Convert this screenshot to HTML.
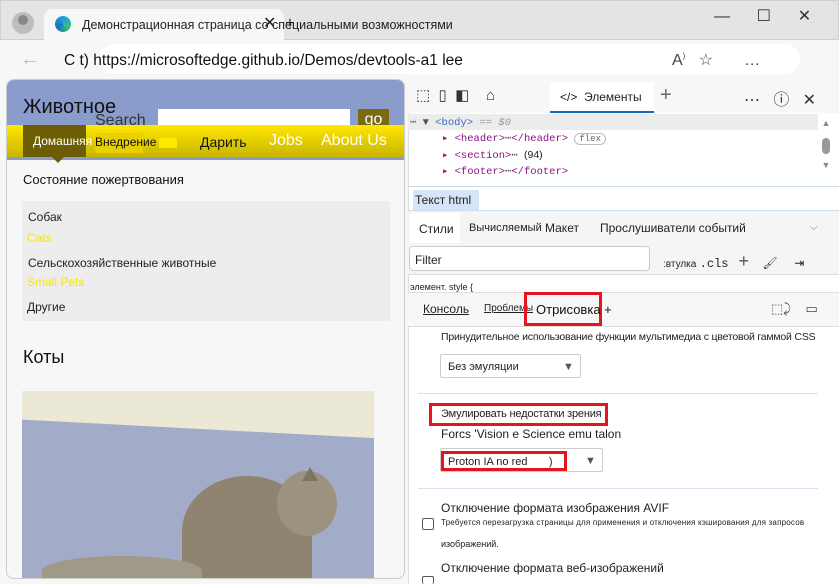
<!DOCTYPE html>
<html><head><meta charset="utf-8"><style>
*{box-sizing:border-box;margin:0;padding:0}
body{width:839px;height:584px;overflow:hidden;background:#f7f7f7;font-family:"Liberation Sans",sans-serif;position:relative;font-size:12px;color:#222}
.a{position:absolute}
.t{white-space:nowrap}
</style></head><body>
<div class="a" style="left:0;top:0;width:839px;height:40px;background:#e4e4e4;border:1px solid #cfcfcf"></div>
<div class="a" style="left:12px;top:12px;width:22px;height:22px;border-radius:50%;background:#bdbdbd"></div>
<div class="a" style="left:18px;top:15px;width:10px;height:10px;border-radius:50%;background:#888"></div>
<div class="a" style="left:44px;top:9px;width:240px;height:31px;background:#f7f7f7;border-radius:8px 8px 0 0"></div>
<div class="a" style="left:55px;top:16px;width:16px;height:16px;border-radius:50%;background:conic-gradient(#1fa0e0,#35c07a,#1a6fc0,#1fa0e0)"></div>
<div class="a t" style="left:82px;top:18px;font-size:12.5px">Демонстрационная страница со специальными возможностями</div>
<div class="a t" style="left:263px;top:13px;font-size:16px;color:#222">✕&nbsp;&nbsp;+</div>
<div class="a t" style="left:714px;top:6px;font-size:16px;color:#333">—&nbsp;&nbsp;&nbsp;&nbsp;&nbsp;&nbsp;☐&nbsp;&nbsp;&nbsp;&nbsp;&nbsp;&nbsp;✕</div>
<div class="a t" style="left:20px;top:48px;font-size:20px;color:#bbb">←</div>
<div class="a" style="left:100px;top:44px;width:700px;height:30px;background:#fff;border-radius:15px"></div>
<div class="a t" style="left:64px;top:52px;font-size:15.5px;color:#111">C t) https://microsoftedge.github.io/Demos/devtools-a1 lee</div>
<div class="a t" style="left:672px;top:50px;font-size:16px;color:#444">A<sup style="font-size:8px">)</sup>&nbsp;&nbsp;&nbsp;☆&nbsp;&nbsp;&nbsp;&nbsp;&nbsp;&nbsp;&nbsp;…</div>
<div class="a" style="left:6px;top:79px;width:399px;height:500px;background:#f7f7f7;border:1px solid #ccc;border-radius:8px;overflow:hidden">
 <div class="a" style="left:0;top:0;width:399px;height:80px;background:#8a9ccc"></div>
 <div class="a t" style="left:16px;top:16px;font-size:20px;color:#111">Животное</div>
 <div class="a t" style="left:88px;top:32px;font-size:16px;color:#333">Search</div>
 <div class="a" style="left:151px;top:29px;width:192px;height:20px;background:#fff"></div>
 <div class="a" style="left:351px;top:29px;width:31px;height:24px;background:#7a6a10;color:#fff;font-size:16px;text-align:center;padding-top:2px">go</div>
 <div class="a" style="left:0;top:45px;width:399px;height:32px;background:linear-gradient(#ffe800,#c9b400)"></div>
 <div class="a" style="left:16px;top:45px;width:63px;height:32px;background:#6d5e06"></div>
 <div class="a" style="left:45px;top:77px;border:6px solid transparent;border-top-color:#6d5e06"></div>
 <div class="a t" style="left:26px;top:54px;font-size:12px;color:#fff">Домашняя</div>
 <div class="a" style="left:88px;top:53px;width:48px;height:20px;background:#e8d000"></div>
 <div class="a t" style="left:88px;top:55px;font-size:12px;color:#111">Внедрение</div>
 <div class="a" style="left:152px;top:58px;width:18px;height:10px;background:#ffe800"></div>
 <div class="a t" style="left:193px;top:54px;font-size:14px;color:#111">Дарить</div>
 <div class="a t" style="left:262px;top:52px;font-size:16px;color:#fff">Jobs</div>
 <div class="a t" style="left:314px;top:52px;font-size:16px;color:#fff">About Us</div>
 <div class="a t" style="left:16px;top:92px;font-size:13px;color:#111">Состояние пожертвования</div>
 <div class="a" style="left:15px;top:121px;width:368px;height:120px;background:#ededed"></div>
 <div class="a t" style="left:21px;top:130px;font-size:12px">Собак</div>
 <div class="a t" style="left:20px;top:151px;font-size:12px;color:#f5e800">Cats</div>
 <div class="a t" style="left:21px;top:176px;font-size:12px">Сельскохозяйственные животные</div>
 <div class="a t" style="left:20px;top:195px;font-size:12px;color:#f5e800">Small Pets</div>
 <div class="a t" style="left:20px;top:220px;font-size:12px">Другие</div>
 <div class="a t" style="left:16px;top:267px;font-size:18px;color:#111">Коты</div>
 <div class="a" style="left:15px;top:311px;width:352px;height:190px;background:#a2abc8;overflow:hidden">
  <div class="a" style="left:-20px;top:-40px;width:400px;height:78px;background:#ece8d6;transform:rotate(3deg)"></div>
  <div class="a" style="left:160px;top:85px;width:130px;height:110px;background:#8f8470;border-radius:50% 50% 0 0"></div>
  <div class="a" style="left:255px;top:80px;width:60px;height:65px;background:#9c9280;border-radius:50%"></div>
  <div class="a" style="left:280px;top:68px;border:8px solid transparent;border-bottom:14px solid #7e7462"></div>
  <div class="a" style="left:20px;top:165px;width:160px;height:30px;background:#a09888;border-radius:50% 50% 0 0"></div>
 </div>
</div>
<div class="a" style="left:408px;top:79px;width:431px;height:505px;background:#fff;border-left:1px solid #ddd"></div>
<div class="a" style="left:408px;top:79px;width:431px;height:34px;background:#f7f7f7"></div>
<div class="a t" style="left:416px;top:86px;font-size:15px;color:#333">⬚&nbsp;&nbsp;▯&nbsp;&nbsp;◧&nbsp;&nbsp;&nbsp;&nbsp;⌂</div>
<div class="a" style="left:550px;top:82px;width:104px;height:31px;background:#fff;border-bottom:2px solid #0f6cbd"></div>
<div class="a t" style="left:560px;top:90px;font-size:12px;color:#222">&lt;/&gt;&nbsp;&nbsp;Элементы</div>
<div class="a t" style="left:660px;top:84px;font-size:20px;color:#666">+</div>
<div class="a t" style="left:744px;top:86px;font-size:16px;color:#333">⋯&nbsp;&nbsp;&nbsp;ⓘ&nbsp;&nbsp;&nbsp;✕</div>
<div class="a" style="left:408px;top:114px;width:410px;height:16px;background:#ececec"></div>
<div class="a t" style="left:410px;top:116px;font-family:'Liberation Mono',monospace;font-size:10.5px;color:#555">⋯ ▼ <span style="color:#3a6cbf">&lt;body&gt;</span> <i style="color:#999">== $0</i></div>
<div class="a t" style="left:442px;top:131px;font-family:'Liberation Mono',monospace;font-size:10.5px;color:#881280;line-height:16px">▸ &lt;header&gt;<span style="color:#555">⋯</span>&lt;/header&gt; <span style="color:#666;border:1px solid #bbb;border-radius:8px;font-size:9px;padding:0 4px">flex</span><br>▸ &lt;section&gt;<span style="color:#555">⋯</span> <span style="color:#222;font-family:'Liberation Sans'">(94)</span><br>▸ &lt;footer&gt;<span style="color:#555">⋯</span>&lt;/footer&gt;</div>
<div class="a" style="left:820px;top:118px;width:12px;height:60px;color:#888;font-size:9px;text-align:center">▲<div style="width:8px;height:16px;background:#999;border-radius:4px;margin:10px auto 6px"></div>▼</div>
<div class="a" style="left:408px;top:186px;width:431px;height:1px;background:#cde"></div>
<div class="a" style="left:413px;top:190px;width:66px;height:20px;background:#d6e4f7"></div>
<div class="a t" style="left:415px;top:193px;font-size:12px">Текст html</div>
<div class="a" style="left:408px;top:210px;width:431px;height:1px;background:#cde"></div>
<div class="a" style="left:408px;top:211px;width:431px;height:35px;background:#f5f5f5"></div>
<div class="a" style="left:410px;top:213px;width:50px;height:30px;background:#fff"></div>
<div class="a t" style="left:419px;top:222px;font-size:12px">Стили</div>
<div class="a t" style="left:469px;top:222px;font-size:11px">Вычисляемый</div>
<div class="a t" style="left:545px;top:221px;font-size:12px">Макет</div>
<div class="a t" style="left:600px;top:221px;font-size:12px">Прослушиватели событий</div>
<div class="a t" style="left:810px;top:222px;font-size:10px;color:#777">⌵</div>
<div class="a" style="left:408px;top:246px;width:431px;height:28px;background:#f5f5f5"></div>
<div class="a" style="left:409px;top:246px;width:241px;height:25px;background:#fff;border:1px solid #ccc;border-radius:4px"></div>
<div class="a t" style="left:415px;top:253px;font-size:12px">Filter</div>
<div class="a t" style="left:663px;top:251px;font-size:12px"><span style="font-size:10px">:втулка</span> <span style="font-family:'Liberation Mono'">.cls</span>&nbsp;&nbsp;&nbsp;<span style="font-size:18px;color:#555">+</span>&nbsp;&nbsp;&nbsp;&nbsp;<span style="color:#444">🖌</span>&nbsp;&nbsp;&nbsp;&nbsp;&nbsp;⇥</div>
<div class="a" style="left:408px;top:274px;width:431px;height:1px;background:#ddd"></div>
<div class="a t" style="left:410px;top:282px;font-size:9px">элемент. style {</div>
<div class="a" style="left:408px;top:292px;width:431px;height:35px;background:#f7f7f7;border-top:1px solid #ddd;border-bottom:1px solid #ddd"></div>
<div class="a t" style="left:423px;top:302px;font-size:12px;text-decoration:underline">Консоль</div>
<div class="a t" style="left:484px;top:303px;font-size:10px;text-decoration:underline">Проблемы</div>
<div class="a" style="left:524px;top:292px;width:78px;height:34px;border:3px solid #e3151e"></div>
<div class="a t" style="left:536px;top:302px;font-size:13px;color:#111">Отрисовка +</div>
<div class="a t" style="left:771px;top:301px;font-size:13px;color:#444">⬚⤸&nbsp;&nbsp;&nbsp;&nbsp;▭</div>
<div class="a t" style="left:441px;top:331px;font-size:10.5px;letter-spacing:-.2px">Принудительное использование функции мультимедиа с цветовой гаммой CSS</div>
<div class="a" style="left:440px;top:354px;width:141px;height:24px;border:1px solid #ccc;border-radius:2px"></div>
<div class="a t" style="left:448px;top:361px;font-size:11px">Без эмуляции</div>
<div class="a t" style="left:563px;top:361px;font-size:11px;color:#555">▼</div>
<div class="a" style="left:418px;top:393px;width:400px;height:1px;background:#d6e4f2"></div>
<div class="a" style="left:429px;top:403px;width:179px;height:23px;border:3px solid #e3151e"></div>
<div class="a t" style="left:441px;top:408px;font-size:11px;letter-spacing:-.2px">Эмулировать недостатки зрения</div>
<div class="a t" style="left:441px;top:427px;font-size:12px">Forcs 'Vision e Science emu talon</div>
<div class="a" style="left:440px;top:448px;width:163px;height:24px;border:1px solid #ccc;border-radius:2px"></div>
<div class="a" style="left:441px;top:451px;width:126px;height:20px;border:3px solid #e3151e"></div>
<div class="a t" style="left:448px;top:456px;font-size:11px">Proton IA no red&nbsp;&nbsp;&nbsp;&nbsp;&nbsp;&nbsp;&nbsp;)</div>
<div class="a t" style="left:585px;top:455px;font-size:11px;color:#555">▼</div>
<div class="a" style="left:418px;top:488px;width:400px;height:1px;background:#d6e4f2"></div>
<div class="a t" style="left:441px;top:501px;font-size:12px">Отключение формата изображения AVIF</div>
<div class="a" style="left:422px;top:518px;width:12px;height:12px;border:1px solid #555;border-radius:2px"></div>
<div class="a t" style="left:441px;top:518px;font-size:8px;letter-spacing:.2px">Требуется перезагрузка страницы для применения и отключения кэширования для запросов</div>
<div class="a t" style="left:441px;top:539px;font-size:9px">изображений.</div>
<div class="a t" style="left:441px;top:561px;font-size:12px">Отключение формата веб-изображений</div>
<div class="a" style="left:422px;top:576px;width:12px;height:8px;border:1px solid #555;border-bottom:none;border-radius:2px"></div>
</body></html>
